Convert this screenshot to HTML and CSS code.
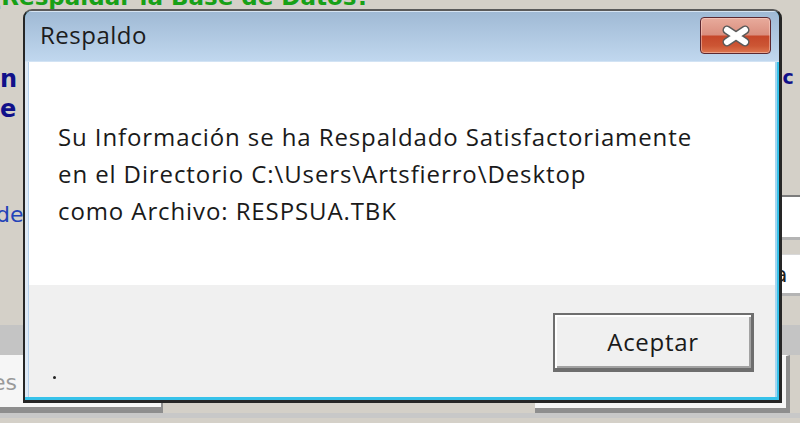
FILE: index.html
```html
<!DOCTYPE html>
<html lang="es">
<head>
    <meta charset="UTF-8">
    <meta name="viewport" content="width=device-width, initial-scale=1.0">
    <title>Respaldo</title>
    <link rel="stylesheet" href="styles.css">
</head>
<body>
    <div class="screen">
        <!-- application window behind the dialog -->
        <div class="app">
            <div class="app-title"><span>¿Respaldar la Base de Datos?</span></div>
            <div class="app-body">
                <div class="side side-left">
                    <span class="bold-label">n</span>
                    <span class="bold-label">e</span>
                    <span class="link-label">de</span>
                </div>
                <div class="side side-right">
                    <span class="bold-label small">ic</span>
                    <div class="field"></div>
                    <div class="field field-text">a</div>
                </div>
            </div>
            <div class="app-foot">
                <div class="foot-band"></div>
                <div class="foot-row">
                    <div class="input-box">es</div>
                    <div class="back-button"></div>
                </div>
                <div class="foot-line"></div>
            </div>
        </div>

        <!-- message box -->
        <div class="dialog">
            <div class="titlebar">
                <span class="title">Respaldo</span>
                <button class="close-btn" aria-label="Cerrar">
                    <svg width="30" height="22" viewBox="0 0 30 22">
                        <path d="M6 5 L24 17 M24 5 L6 17" stroke="#5a5a5a" stroke-width="9" stroke-linecap="round" fill="none"/>
                        <path d="M6 5 L24 17 M24 5 L6 17" stroke="#ffffff" stroke-width="6" stroke-linecap="round" fill="none"/>
                    </svg>
                </button>
            </div>
            <div class="frame">
                <div class="client">
                    <div class="message">
                        Su Información se ha Respaldado Satisfactoriamente<br>
                        en el Directorio C:\Users\Artsfierro\Desktop<br>
                        como Archivo: RESPSUA.TBK
                    </div>
                    <div class="footer">
                        <span class="dot"></span>
                        <button class="btn-ok">Aceptar</button>
                    </div>
                </div>
            </div>
        </div>
    </div>
</body>
</html>
```

FILE: styles.css
```css
body {
    margin: 0;
    width: 800px;
    height: 423px;
    overflow: hidden;
    font-family: 'Open Sans', 'Noto Sans', sans-serif;
}
.screen {
    position: relative;
    width: 800px;
    height: 423px;
    background: #d4d0c8;
}

/* background application */
.app {
    height: 423px;
    display: flex;
    flex-direction: column;
}
.app-title {
    height: 9px;
    flex: none;
    overflow: hidden;
}
.app-title span {
    display: block;
    margin: -14px 0 0 -12px;
    font: bold 23px/22px 'DejaVu Sans', sans-serif;
    color: #17a017;
    white-space: nowrap;
}
.app-body {
    height: 316px;
    flex: none;
    display: flex;
    justify-content: space-between;
}
.side {
    display: flex;
    flex-direction: column;
    overflow: hidden;
}
.side-left {
    width: 23px;
    padding-top: 55px;
}
.side-right {
    width: 18px;
    padding-top: 56px;
}
.bold-label {
    font: bold 24px/30px 'DejaVu Sans', sans-serif;
    color: #10108a;
}
.bold-label.small {
    font-size: 19px;
    line-height: 24px;
    margin-left: -6px;
}
.link-label {
    margin: 78px 0 0 -4px;
    font: 22px/26px 'DejaVu Sans', sans-serif;
    color: #2343b8;
}
.field {
    height: 40px;
    margin-top: 106px;
    background: #fff;
    border-top: 2px solid #7c7c7c;
    border-bottom: 3px solid #b4b4b4;
}
.field-text {
    margin-top: 14px;
    height: 38px;
    border-top: 1px solid #d8d8d8;
    font: 22px/40px 'DejaVu Sans', sans-serif;
    color: #222;
    text-indent: -8px;
}
.app-foot {
    flex: 1;
    display: flex;
    flex-direction: column;
}
.foot-band {
    height: 30px;
    background: #c4c4c4;
}
.foot-row {
    height: 58px;
    display: flex;
    justify-content: space-between;
}
.input-box {
    width: 163px;
    box-sizing: border-box;
    background: #f6f6f6;
    border-right: 2px solid #8e8e8e;
    border-bottom: 6px solid #8e8e8e;
    font: 22px/40px 'DejaVu Sans', sans-serif;
    color: #9a9a9a;
    padding-top: 8px;
    text-indent: -8px;
}
.back-button {
    width: 255px;
    margin-right: 10px;
    box-sizing: border-box;
    background: #f6f6f6;
    border-top: 1px solid #fff;
    border-right: 4px solid #8e8e8e;
    border-bottom: 5px solid #8e8e8e;
}
.foot-line {
    height: 5px;
    background: #c8c8c8;
}

/* dialog window */
.dialog {
    position: absolute;
    left: 23px;
    top: 9px;
    width: 759px;
    height: 394px;
    box-sizing: border-box;
    border: 2px solid #262626;
    border-top-color: #5a5a5a;
    border-right-width: 3px;
    border-bottom-width: 3px;
    border-radius: 9px 9px 0 0;
    background: #36c2ea;
    display: flex;
    flex-direction: column;
    overflow: hidden;
}
.titlebar {
    height: 51px;
    flex: none;
    box-sizing: border-box;
    display: flex;
    align-items: flex-start;
    justify-content: space-between;
    padding: 6px 8px 0 15px;
    background: linear-gradient(#9fb9d4, #c1d8ef);
    box-shadow: inset 0 1px 0 #d6e4f2, inset 0 -1px 0 #d2e3f4;
}
.title {
    margin-top: 3px;
    font-size: 24px;
    line-height: 30px;
    letter-spacing: 0.5px;
    color: #1c1c1c;
}
.close-btn {
    width: 71px;
    height: 37px;
    padding: 0;
    display: flex;
    align-items: center;
    justify-content: center;
    border: 1px solid #5c2830;
    border-radius: 4px;
    background: linear-gradient(#e8ab9c 0%, #da8e7e 48%, #c6472a 52%, #cc5634 80%, #dd7650 100%);
    box-shadow: inset 0 0 0 1px rgba(255, 220, 210, 0.45);
}
.frame {
    flex: 1;
    display: flex;
    margin: 0 2px 3px 0;
    border-left: 3px solid #dfeaf6;
    border-right: 2px solid #a6d5ef;
}
.client {
    flex: 1;
    display: flex;
    flex-direction: column;
    background: #fff;
    border-left: 1px solid #b6d0ea;
}
.message {
    flex: 1;
    padding: 56px 0 0 29px;
    font-size: 24px;
    line-height: 37px;
    letter-spacing: 0.9px;
    color: #1a1a1a;
}
.footer {
    height: 112px;
    flex: none;
    box-sizing: border-box;
    display: flex;
    align-items: flex-start;
    padding: 28px 21px 0 24px;
    background: #f0f0f0;
}
.dot {
    align-self: flex-end;
    width: 3px;
    height: 3px;
    margin-bottom: 18px;
    border-radius: 50%;
    background: #222;
}
.btn-ok {
    margin-left: auto;
    width: 201px;
    height: 59px;
    box-sizing: border-box;
    border: 2px solid #6e6e6e;
    border-right-width: 3px;
    border-bottom-width: 4px;
    background: #f0f0f0;
    box-shadow: inset 2px 2px 0 #fff, inset -2px -2px 0 #a2a2a2;
    font-family: 'Open Sans', 'Noto Sans', sans-serif;
    font-size: 24px;
    letter-spacing: 0.7px;
    color: #1a1a1a;
    padding: 0;
}
```
